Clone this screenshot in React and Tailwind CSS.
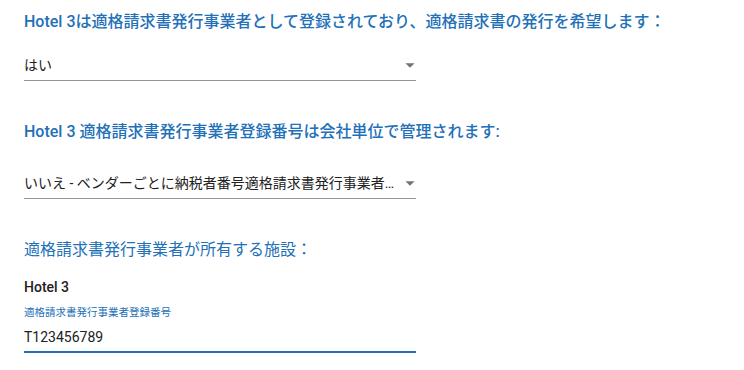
const Arrow = () => (
  <svg viewBox="0 0 24 24" className="w-[22px] h-[22px] shrink-0 -mr-[5px] fill-[#757575]">
    <path d="M7 10l5 5 5-5z" />
  </svg>
);

const SelectField = ({ value, className = '' }) => (
  <div className={`w-[392px] flex items-center border-b border-[#949494] pb-[5px] ${className}`}>
    <span className="flex-1 min-w-0 truncate text-[14px] leading-5 text-[#212121]">{value}</span>
    <Arrow />
  </div>
);

const App = () => {
  return (
    <div className="w-[744px] h-[370px] bg-white pl-6 pt-[10px] font-['Roboto','Noto_Sans_CJK_JP',sans-serif] overflow-hidden">
      <h2 className="text-[16px] leading-6 font-medium text-[#2270b8]">
        Hotel 3は適格請求書発行事業者として登録されており、適格請求書の発行を希望します：
      </h2>
      <SelectField value="はい" className="mt-[21px] h-[26px]" />

      <h2 className="mt-[39px] text-[16px] leading-6 font-medium text-[#2270b8]">
        Hotel 3 適格請求書発行事業者登録番号は会社単位で管理されます:
      </h2>
      <SelectField
        value="いいえ - ベンダーごとに納税者番号適格請求書発行事業者登録番号を管理します"
        className="mt-[29px] h-[26px]"
      />

      <h3 className="mt-[39px] text-[16px] leading-6 font-normal text-[#2270b8]">
        適格請求書発行事業者が所有する施設：
      </h3>
      <div className="mt-[15px] text-[14px] leading-5 font-medium text-[#212121]">Hotel 3</div>

      <div className="mt-[9px] w-[392px]">
        <label className="block text-[10.5px] leading-[14px] text-[#2270b8]">適格請求書発行事業者登録番号</label>
        <div className="mt-[7px] pb-1 border-b-2 border-[#2270b8] text-[14px] leading-5 text-[#212121]">
          T123456789
        </div>
      </div>
    </div>
  );
};

export default App;
